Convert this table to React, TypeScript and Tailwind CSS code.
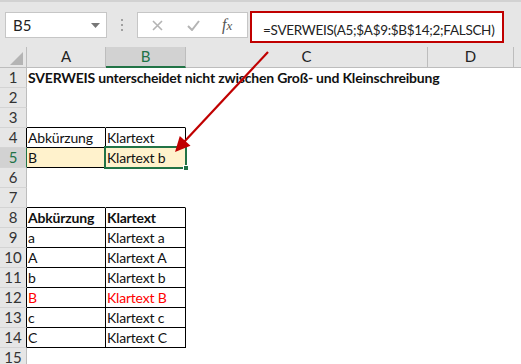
import React from "react";

const font = "font-['Lato','Noto_Sans',sans-serif]";

type Row = {
    n: number;
    a?: string;
    b?: string;
    bold?: boolean;
    red?: boolean;
    table?: boolean;
    tableTop?: boolean;
    fill?: boolean;
    selected?: boolean;
};

const rows: Row[] = [
    { n: 1, a: "SVERWEIS unterscheidet nicht zwischen Groß- und Kleinschreibung", bold: true },
    { n: 2 },
    { n: 3, tableTop: true },
    { n: 4, a: "Abkürzung", b: "Klartext", table: true },
    { n: 5, a: "B", b: "Klartext b", table: true, fill: true, selected: true },
    { n: 6 },
    { n: 7, tableTop: true },
    { n: 8, a: "Abkürzung", b: "Klartext", table: true, bold: true },
    { n: 9, a: "a", b: "Klartext a", table: true },
    { n: 10, a: "A", b: "Klartext A", table: true },
    { n: 11, a: "b", b: "Klartext b", table: true },
    { n: 12, a: "B", b: "Klartext B", table: true, red: true },
    { n: 13, a: "c", b: "Klartext c", table: true },
    { n: 14, a: "C", b: "Klartext C", table: true },
    { n: 15 },
];

const Toolbar = () => (
    <div className="h-[47px] bg-[#e6e6e6] border-t-2 border-[#d2d2d2] flex items-start">
        <div className="ml-[5px] mt-[10px] w-[102px] h-[26px] bg-white border border-[#c6c6c6] flex items-center justify-between pl-[7px] pr-[6px]">
            <span className="text-[15px] text-[#222]">B5</span>
            <svg width="9" height="5" viewBox="0 0 9 5">
                <path d="M0 0h9L4.5 5z" fill="#777" />
            </svg>
        </div>
        <div className="w-[30px] mt-[17px] flex flex-col items-center gap-[3px]">
            <div className="w-[2px] h-[2px] bg-[#a0a0a0]" />
            <div className="w-[2px] h-[2px] bg-[#a0a0a0]" />
            <div className="w-[2px] h-[2px] bg-[#a0a0a0]" />
        </div>
        <div className="mt-[10px] w-[111px] h-[26px] bg-white border border-[#c6c6c6] flex items-center">
            <svg className="ml-[14px]" width="11" height="11" viewBox="0 0 11 11">
                <path d="M1 1l9 9M10 1l-9 9" stroke="#b4b4b4" strokeWidth="1.6" />
            </svg>
            <svg className="ml-[24px]" width="13" height="11" viewBox="0 0 13 11">
                <path d="M1 6l4 4 7-9" stroke="#b4b4b4" strokeWidth="2" fill="none" />
            </svg>
            <span className="ml-[22px] font-['Liberation_Serif',serif] italic text-[16px] text-[#555] leading-none">
                f<span className="text-[13px]">x</span>
            </span>
        </div>
        <div className="ml-[2px] mt-[9px] w-[254px] h-[32px] bg-white border-2 border-[#c00000] pl-[11px] pt-[4px] overflow-hidden">
            <span className="text-[13.5px] tracking-[-0.3px] text-[#222] whitespace-nowrap">=SVERWEIS(A5;$A$9:$B$14;2;FALSCH)</span>
        </div>
    </div>
);

const HeaderRow = () => {
    const cols = [
        { l: "A", w: "w-[79px]" },
        { l: "B", w: "w-[80px]", sel: true },
        { l: "C", w: "w-[242px]" },
        { l: "D", w: "w-[86px]" },
    ];
    return (
        <div className="flex h-[21px] bg-[#e6e6e6] text-[15px] leading-[19px]">
            <div className="w-[27px] shrink-0 border-r border-b border-[#bdbdbd] flex items-end justify-end pr-[3px] pb-[2px]">
                <svg width="13" height="13" viewBox="0 0 13 13">
                    <path d="M13 0v13H0z" fill="#b4b4b4" />
                </svg>
            </div>
            {cols.map((c) =>
                c.sel ? (
                    <div
                        key={c.l}
                        className={`${c.w} shrink-0 bg-[#d2d2d2] border-r border-[#bdbdbd] border-b-2 border-b-[#217346] text-center text-[#217346]`}
                    >
                        {c.l}
                    </div>
                ) : (
                    <div
                        key={c.l}
                        className={`${c.w} shrink-0 border-r border-b border-[#bdbdbd] text-center text-[#222]`}
                    >
                        {c.l}
                    </div>
                )
            )}
            <div className="flex-1 border-b border-[#bdbdbd]" />
        </div>
    );
};

const SheetRow = ({ r }: { r: Row }) => {
    const color = r.red ? "text-[#ff0000]" : "text-[#111]";
    const weight = r.bold ? "font-bold" : "font-normal";
    const edge = r.table || r.tableTop ? "border-b-black" : "border-b-transparent";
    const side = r.table ? "border-r-black" : "border-r-transparent";
    const fill = r.fill ? "bg-[#fff2cc]" : "";
    return (
        <div className="flex h-[20px] leading-[19px]">
            <div
                className={`w-[27px] shrink-0 border-b border-r border-b-[#d4d4d4] text-center text-[15px] ${
                    r.selected
                        ? "bg-[#d2d2d2] text-[#217346] border-r-[#217346]"
                        : r.table
                        ? "bg-[#e6e6e6] text-[#333] border-r-black"
                        : "bg-[#e6e6e6] text-[#333] border-r-[#bdbdbd]"
                }`}
            >
                {r.n}
            </div>
            <div className={`w-[79px] shrink-0 border-b border-r ${edge} ${side} ${fill} pl-[1px] text-[14px] tracking-[-0.2px] whitespace-nowrap ${color} ${weight}`}>
                {r.a}
            </div>
            <div className={`relative w-[80px] shrink-0 border-b border-r ${edge} ${side} ${fill} pl-[1px] text-[14px] tracking-[-0.2px] whitespace-nowrap ${color} ${weight}`}>
                {r.b}
                {r.selected && (
                    <>
                        <div className="absolute -left-[2px] -top-[2px] -right-[2px] -bottom-[2px] border-2 border-[#217346]" />
                        <div className="absolute -right-[4px] -bottom-[4px] w-[6px] h-[6px] bg-[#217346] border border-white" />
                    </>
                )}
            </div>
            <div className="flex-1" />
        </div>
    );
};

export default function App() {
    return (
        <div className={`relative w-[521px] h-[364px] overflow-hidden bg-white ${font}`}>
            <Toolbar />
            <HeaderRow />
            {rows.map((r) => (
                <SheetRow key={r.n} r={r} />
            ))}
            <svg className="absolute left-0 top-0 pointer-events-none" width="521" height="364">
                <line x1="268" y1="52" x2="184" y2="142" stroke="#c00000" strokeWidth="2.2" />
                <polygon points="175,152 190.5,145.8 179.8,136" fill="#c00000" />
            </svg>
        </div>
    );
}
